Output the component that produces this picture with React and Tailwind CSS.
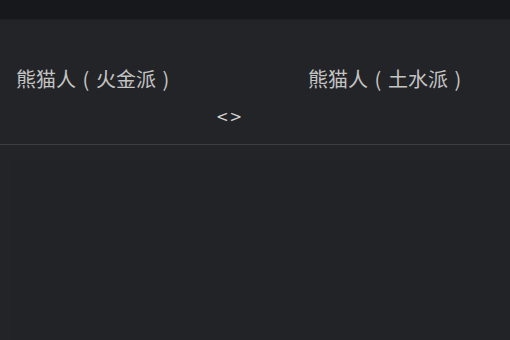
function P({ c }) {
  return <span className="inline-block w-[20px] text-center">{c}</span>;
}

export default function App() {
  const font = { fontFamily: '"Noto Sans CJK SC", "Noto Sans", sans-serif' };
  return (
    <div className="w-[510px] h-[340px] bg-[#232428] flex flex-col overflow-hidden" style={font}>
      <div className="h-[19px] bg-[#17181c] shrink-0" />
      <div className="h-px bg-[#1d1e22] shrink-0" />
      <div className="h-[124px] shrink-0 flex flex-col">
        <div className="flex mt-[47px] text-[20px] leading-[24px] text-[#c4c4c4]">
          <span className="ml-[16px]">熊猫人<P c="(" />火金派<P c=")" /></span>
          <span className="ml-[132px]">熊猫人<P c="(" />土水派<P c=")" /></span>
        </div>
        <div className="flex mt-[17px] text-[15px] leading-[18px] text-[#d4d4d4]" style={{ fontFamily: '"DejaVu Sans", sans-serif' }}>
          <span className="ml-[216px] tracking-[1px]">&lt;&gt;</span>
        </div>
      </div>
      <div className="h-px bg-[#3d3e42] shrink-0" />
      <div className="flex-1 pt-[15px] pl-[10px]">
        <div className="h-full bg-[#222327]" />
      </div>
    </div>
  );
}
